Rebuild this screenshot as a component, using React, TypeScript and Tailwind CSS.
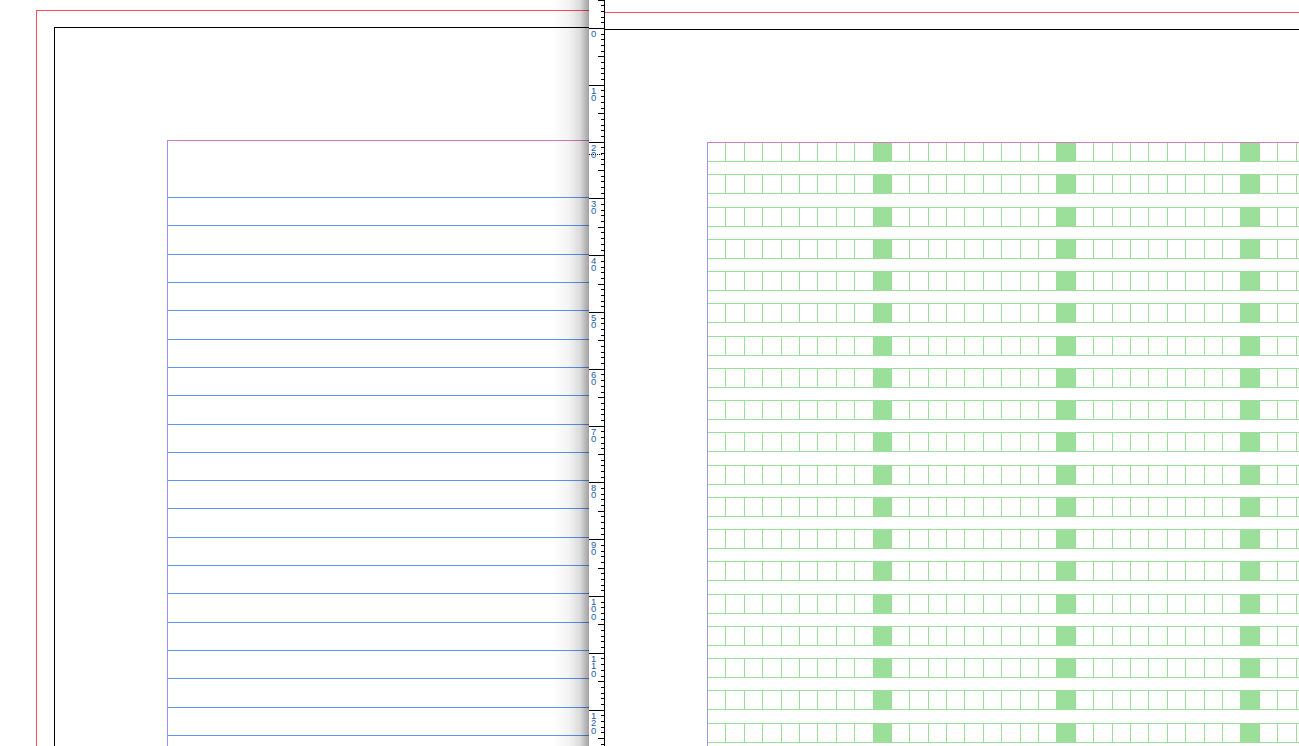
const UNIT = 5.68;
const ORIGIN = 28;

const lineRows = Array.from({ length: 22 });
const gridRows = Array.from({ length: 21 });
const gridCols = Array.from({ length: 34 });

function Ruler() {
  const ticks = [];
  const labels = [];
  for (let u = -5; u <= 130; u++) {
    const y = Math.round(ORIGIN + u * UNIT) + 0.5;
    const len = u % 10 === 0 ? 15 : u % 5 === 0 ? 6 : 3;
    ticks.push(<line key={u} x1={15 - len} x2={15} y1={y} y2={y} stroke="#000" strokeWidth={1} />);
    if (u >= 0 && u <= 120 && u % 10 === 0) {
      String(u)
        .split("")
        .forEach((d, i) => {
          labels.push(
            <text
              key={`${u}-${i}`}
              x={2}
              y={Math.round(ORIGIN + u * UNIT) + 8.5 + i * 7.5}
              fontSize={9.5}
              fill="#1f5aa8"
              fontFamily="'Liberation Sans', Arial, sans-serif"
            >
              {d}
            </text>
          );
        });
    }
  }

  return (
    <div className="w-[16px] shrink-0 h-full bg-white border-r border-black">
      <svg width={15} height={746} className="block">
        {ticks}
        <line x1={0} x2={14} y1={154.5} y2={154.5} stroke="#000" strokeDasharray="1 1" />
        {labels}
      </svg>
    </div>
  );
}

export default function App() {
  return (
    <div className="flex w-[1299px] h-[746px] overflow-hidden bg-white font-['Liberation_Sans',Arial,sans-serif]">
      {/* Left page */}
      <div className="relative w-[589px] shrink-0 h-full overflow-hidden">
        <div className="mt-[10px] ml-[36px] h-[800px] border-t border-l border-[#ff4b5c]">
          <div className="mt-[16px] ml-[17px] h-[800px] border-t border-l border-black">
            <div className="mt-[112px] ml-[112px] h-[800px] border-t border-l border-t-[#d67bb8] border-l-[#9b95ee]">
              <div className="h-[56px]" />
              {lineRows.map((_, i) => (
                <div key={i} className="h-[28.32px] border-t border-[#5a95f2]" />
              ))}
            </div>
          </div>
        </div>
        {/* page curl shadow */}
        <div className="absolute top-0 right-0 h-full w-[36px] bg-[linear-gradient(to_right,rgba(0,0,0,0)_0%,rgba(0,0,0,0.05)_45%,rgba(0,0,0,0.14)_75%,rgba(0,0,0,0.37)_100%)]" />
      </div>

      <Ruler />

      {/* Right page */}
      <div className="flex-1 h-full overflow-hidden">
        <div className="mt-[12px] border-t border-[#ff4b5c]">
          <div className="mt-[16px] border-t border-black">
            <div className="mt-[112px] ml-[102px] h-[800px] border-t border-l border-t-[#d67bb8] border-l-[#9b95ee]">
              <div className="-mt-px">
                {gridRows.map((_, r) => (
                  <div key={r} className="h-[32.25px]">
                    <div
                      className={`flex h-[20px] border-y border-b-[#9cdf9a] ${
                        r === 0 ? "border-t-transparent" : "border-t-[#9cdf9a]"
                      }`}
                    >
                      {gridCols.map((_, c) => (
                        <div
                          key={c}
                          className={`w-[18.4px] shrink-0 h-full border-r border-[#9cdf9a] ${
                            c % 10 === 9 ? "bg-[#9cdf9a]" : ""
                          }`}
                        />
                      ))}
                    </div>
                  </div>
                ))}
              </div>
            </div>
          </div>
        </div>
      </div>
    </div>
  );
}
